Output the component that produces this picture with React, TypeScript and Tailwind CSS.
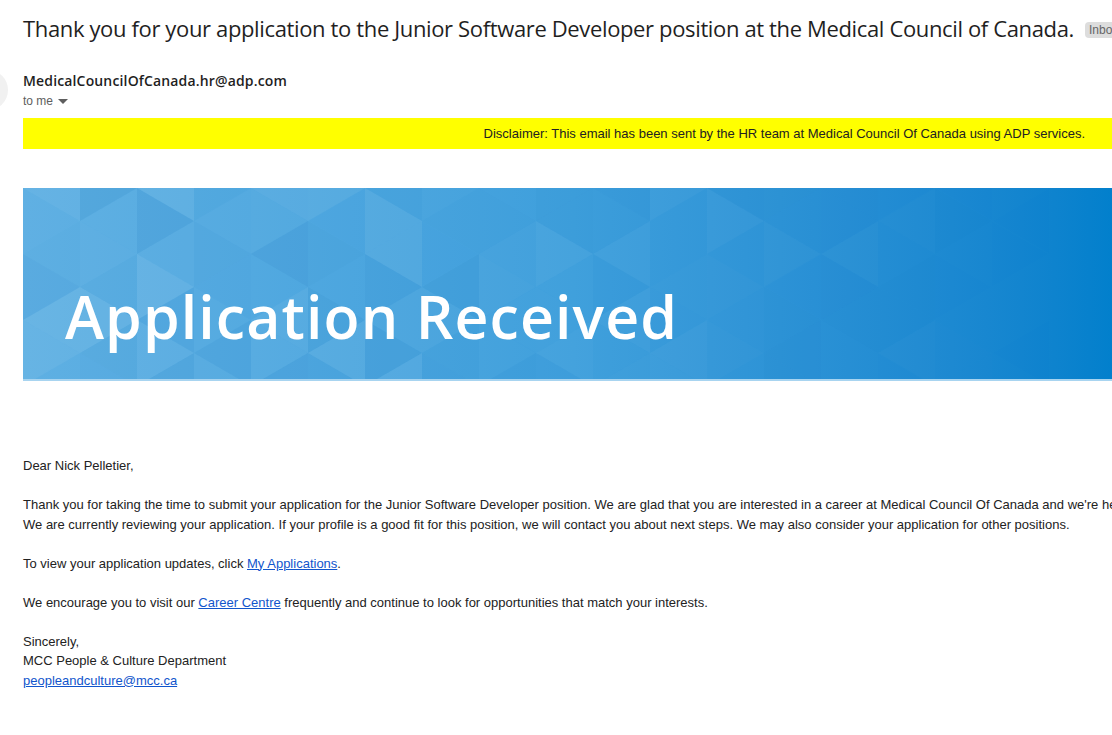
import React from "react";

function rand(i: number) {
  const x = Math.sin(i * 12.9898 + 78.233) * 43758.5453;
  return x - Math.floor(x);
}

function Triangles() {
  const w = 57;
  const h = 66;
  const polys: React.ReactElement[] = [];
  let n = 0;
  for (let c = 0; c < 21; c++) {
    const x0 = c * w;
    const x1 = x0 + w;
    const o = (c % 2) * 33 - 66;
    for (let k = 0; k < 5; k++) {
      const y = o + k * h;
      const fade = Math.max(0, 1 - x0 / 1000);
      const r1 = rand(n++);
      const r2 = rand(n++);
      const f1 = r1 > 0.5 ? "#ffffff" : "#0a5fa8";
      const f2 = r2 > 0.5 ? "#ffffff" : "#0a5fa8";
      const a1 = Math.abs(r1 - 0.5) * 0.2 * fade;
      const a2 = Math.abs(r2 - 0.5) * 0.2 * fade;
      polys.push(
        <polygon key={`a${c}-${k}`} points={`${x0},${y} ${x0},${y + h} ${x1},${y + 33}`} fill={f1} fillOpacity={a1} />
      );
      polys.push(
        <polygon key={`b${c}-${k}`} points={`${x1},${y + 33} ${x1},${y + 99} ${x0},${y + 66}`} fill={f2} fillOpacity={a2} />
      );
    }
  }
  return (
    <svg className="absolute inset-0" width="1100" height="193" viewBox="0 0 1100 193">
      {polys}
    </svg>
  );
}

export default function App() {
  const link = "text-[#1155cc] underline";
  return (
    <div
      className="w-[1112px] h-[735px] overflow-hidden bg-white relative"
      style={{ fontFamily: "Arial, 'Liberation Sans', sans-serif" }}
    >
      {/* avatar peeking */}
      <div className="absolute left-[-32px] top-[70px] w-[40px] h-[40px] rounded-full bg-[#f1f1f1]" />
      <div className="pl-[23px] w-[1140px]">
        <div className="flex items-center h-[56px] whitespace-nowrap">
          <h1
            className="text-[22px] text-[#1f1f1f] font-normal tracking-[-0.36px]"
            style={{ fontFamily: "'Open Sans', 'Noto Sans', sans-serif" }}
          >
            Thank you for your application to the Junior Software Developer position at the Medical Council of Canada.
          </h1>
          <span className="ml-[11px] mt-[4px] px-[4px] h-[16px] leading-[16px] rounded-[4px] bg-[#dddddd] text-[#666666] text-[12px]">
            Inbox
          </span>
        </div>
        <div className="pt-[16px]">
          <div
            className="text-[14px] font-semibold text-[#1f1f1f] leading-[18px] tracking-[0.15px]"
            style={{ fontFamily: "'Open Sans', Arial, sans-serif" }}
          >
            MedicalCouncilOfCanada.hr@adp.com
          </div>
          <div className="flex items-center text-[12px] text-[#5e5e5e] leading-[18px] mt-[2px]">
            to me
            <svg width="20" height="14" viewBox="0 0 20 14">
              <path d="M5 5 L15 5 L10 10 Z" fill="#5e5e5e" />
            </svg>
          </div>
        </div>
        <div className="mt-[8px] w-[1100px] h-[31px] bg-[#ffff00] flex items-center justify-end pr-[38px] text-[13px] text-[#222222]">
          Disclaimer: This email has been sent by the HR team at Medical Council Of Canada using ADP services.
        </div>
        <div className="mt-[39px] w-[1100px] h-[193px] relative overflow-hidden bg-gradient-to-r from-[#5fb0e3] via-[#3e9fdc] to-[#007fcc] border-b-[2px] border-[#a8d4f0]">
          <Triangles />
          <div
            className="absolute left-[42px] top-[91px] text-white text-[59px] leading-[74px] font-semibold tracking-[1.1px]"
            style={{ fontFamily: "'Open Sans', 'Noto Sans', sans-serif" }}
          >
            Application Received
          </div>
        </div>
        <div className="mt-[75px] text-[13px] text-[#222222] leading-[19.5px] whitespace-nowrap">
          <div>Dear Nick Pelletier,</div>
          <div className="h-[19.5px]" />
          <div>
            Thank you for taking the time to submit your application for the Junior Software Developer position. We are glad that you are interested in a career at Medical Council Of Canada and we're here to help you.
          </div>
          <div>
            We are currently reviewing your application. If your profile is a good fit for this position, we will contact you about next steps. We may also consider your application for other positions.
          </div>
          <div className="h-[19.5px]" />
          <div>
            To view your application updates, click <a className={link} href="#">My Applications</a>.
          </div>
          <div className="h-[19.5px]" />
          <div>
            We encourage you to visit our <a className={link} href="#">Career Centre</a> frequently and continue to look for opportunities that match your interests.
          </div>
          <div className="h-[19.5px]" />
          <div>Sincerely,</div>
          <div>MCC People &amp; Culture Department</div>
          <div>
            <a className={link} href="#">peopleandculture@mcc.ca</a>
          </div>
        </div>
      </div>
    </div>
  );
}
